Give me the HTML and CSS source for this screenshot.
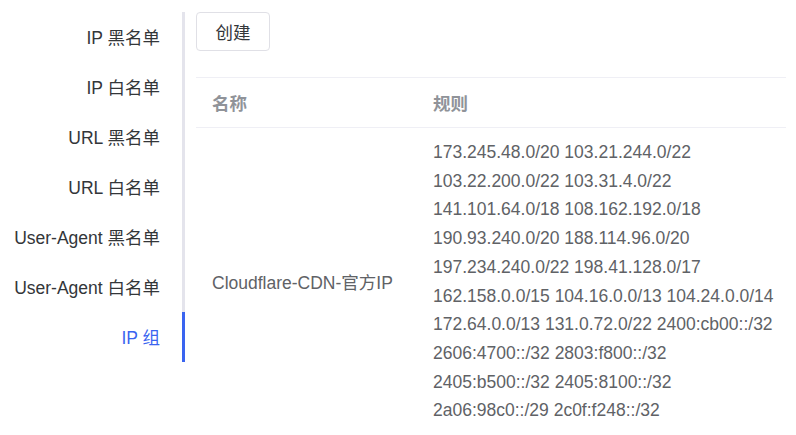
FILE: index.html
```html
<!DOCTYPE html>
<html lang="zh-CN">
<head>
<meta charset="utf-8">
<title>IP 组</title>
<link rel="stylesheet" href="styles.css">
</head>
<body>
<div class="layout">
  <nav class="tabs">
    <div class="tab">IP 黑名单</div>
    <div class="tab">IP 白名单</div>
    <div class="tab">URL 黑名单</div>
    <div class="tab">URL 白名单</div>
    <div class="tab">User-Agent 黑名单</div>
    <div class="tab">User-Agent 白名单</div>
    <div class="tab active">IP 组</div>
  </nav>
  <main class="content">
    <div class="toolbar">
      <button class="btn">创建</button>
    </div>
    <table class="table">
      <thead>
        <tr><th class="col-name">名称</th><th>规则</th></tr>
      </thead>
      <tbody>
        <tr>
          <td class="col-name">Cloudflare-CDN-官方IP</td>
          <td class="rules">
            <div>173.245.48.0/20 103.21.244.0/22</div>
            <div>103.22.200.0/22 103.31.4.0/22</div>
            <div>141.101.64.0/18 108.162.192.0/18</div>
            <div>190.93.240.0/20 188.114.96.0/20</div>
            <div>197.234.240.0/22 198.41.128.0/17</div>
            <div>162.158.0.0/15 104.16.0.0/13 104.24.0.0/14</div>
            <div>172.64.0.0/13 131.0.72.0/22 2400:cb00::/32</div>
            <div>2606:4700::/32 2803:f800::/32</div>
            <div>2405:b500::/32 2405:8100::/32</div>
            <div>2a06:98c0::/29 2c0f:f248::/32</div>
          </td>
        </tr>
      </tbody>
    </table>
  </main>
</div>
</body>
</html>
```
FILE: styles.css
```css
* { box-sizing: border-box; }
html, body { margin: 0; padding: 0; background: #fff; }
body {
  font-family: "Liberation Sans", "Noto Sans CJK SC", sans-serif;
  font-size: 17.5px;
  color: #333639;
  overflow: hidden;
}
.layout {
  display: flex;
  align-items: flex-start;
  padding-top: 12px;
}
.tabs {
  width: 185px;
  flex: none;
  display: flex;
  flex-direction: column;
}
.tab {
  height: 50px;
  line-height: 48px;
  padding-top: 2px;
  text-align: right;
  padding-right: 22px;
  border-right: 3px solid #e4e4ec;
  white-space: nowrap;
}
.tab.active {
  color: #3a64f0;
  border-right-color: #3a64f0;
}
.content {
  flex: 1;
  padding-left: 11px;
  padding-right: 10px;
}
.toolbar { height: 65px; }
.btn {
  height: 39px;
  width: 74px;
  padding: 0;
  border: 1px solid #e0e0e6;
  border-radius: 4px;
  background: #fff;
  font-family: inherit;
  font-size: 17.5px;
  color: #333639;
}
.table {
  width: 100%;
  table-layout: fixed;
  border-collapse: collapse;
  border-top: 1px solid #efeff5;
}
.table th {
  text-align: left;
  font-weight: 700;
  color: #909399;
  height: 50px;
  padding: 0 16px;
  border-bottom: 1px solid #efeff5;
}
.col-name { width: 221px; }
.table td {
  padding: 10px 16px 6px;
  color: #606266;
  vertical-align: middle;
}
.rules { line-height: 28.7px; white-space: nowrap; }
```
